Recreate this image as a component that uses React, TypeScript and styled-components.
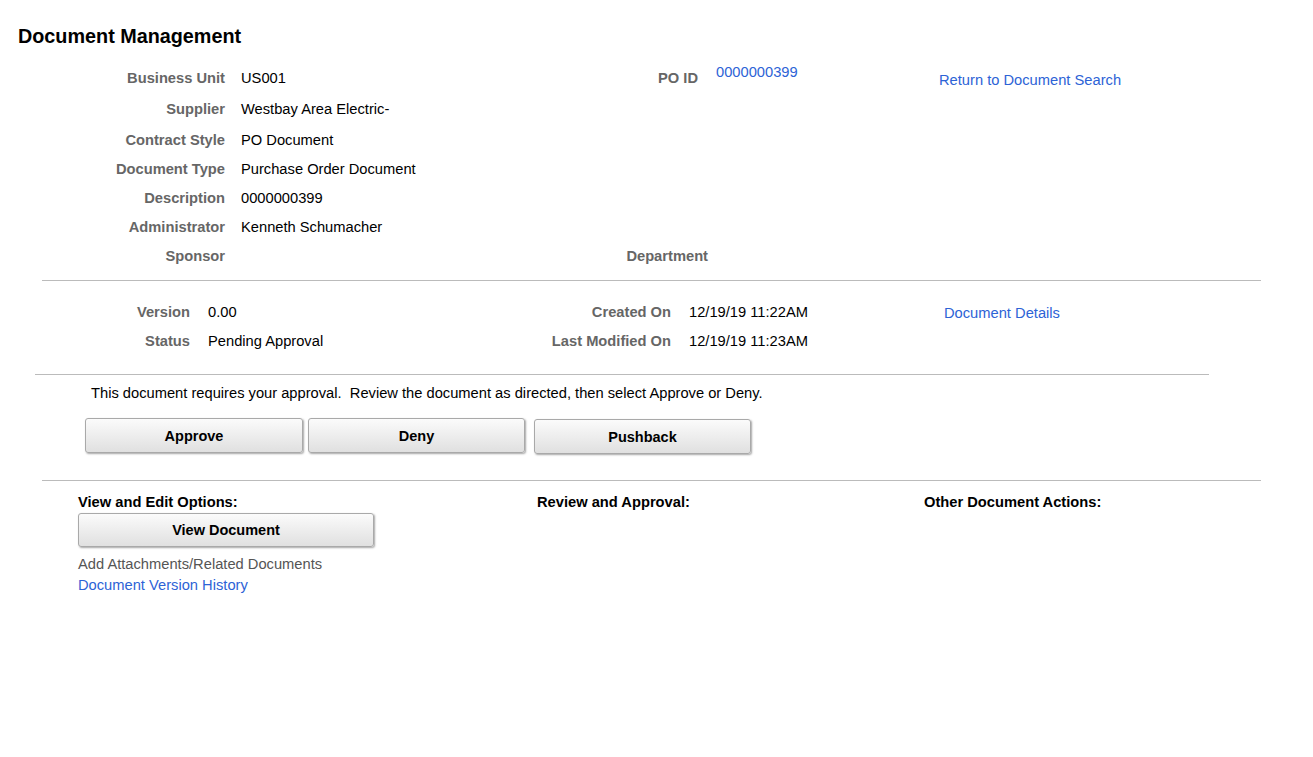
import React from 'react';
import styled, { createGlobalStyle } from 'styled-components';

const GlobalStyle = createGlobalStyle`
	body {
		margin: 0;
		background: #fff;
		font-family: 'Liberation Sans', Arial, sans-serif;
		font-size: 14.7px;
		color: #000;
	}
`;

const Page = styled.div`
	width: 1313px;
	padding-top: 24px;
`;

const Title = styled.h1`
	margin: 0 0 15px 18px;
	font-size: 19.8px;
	line-height: 24px;
	font-weight: bold;
	color: #000;
`;

const HeaderGrid = styled.div`
	display: grid;
	grid-template-columns: 225px 375px 98px 241px auto;
	grid-template-rows: 29px 33px 29px 29px 29px 29px 29px;
	align-items: center;
	line-height: 16px;
`;

const VersionGrid = styled.div`
	display: grid;
	grid-template-columns: 190px 340px 141px 273px auto;
	grid-auto-rows: 29px;
	align-items: center;
	line-height: 16px;
	margin-top: 16px;
`;

const Label = styled.div<{ $shift?: number }>`
	text-align: right;
	font-weight: bold;
	color: #666;
	white-space: nowrap;
	margin-right: ${(p) => -(p.$shift || 0)}px;
`;

const Value = styled.div<{ $pad: number; $lift?: number }>`
	padding-left: ${(p) => p.$pad}px;
	white-space: nowrap;
	position: relative;
	top: ${(p) => -(p.$lift || 0)}px;
`;

const Link = styled.a<{ $drop?: number }>`
	color: #2d63d6;
	text-decoration: none;
	white-space: nowrap;
	position: relative;
	top: ${(p) => p.$drop || 0}px;
	cursor: pointer;
`;

const Rule = styled.hr<{ $left: number; $right: number; $top?: number }>`
	border: 0;
	border-top: 1px solid #bbb;
	height: 0;
	margin: ${(p) => p.$top || 0}px ${(p) => p.$right}px 0 ${(p) => p.$left}px;
`;

const Message = styled.p`
	margin: 10px 0 0 91px;
	line-height: 16px;
`;

const ButtonRow = styled.div`
	display: flex;
	gap: 5px;
	margin: 17px 0 26px 85px;
	align-items: flex-start;
`;

const Button = styled.button<{ $width: number; $height?: number; $offset?: number }>`
	width: ${(p) => p.$width}px;
	height: ${(p) => p.$height || 35}px;
	margin-left: ${(p) => p.$offset || 0}px;
	margin-top: ${(p) => (p.$offset ? 1 : 0)}px;
	border: 1px solid #a9a9a9;
	border-radius: 3px;
	background: linear-gradient(#fbfbfb, #e0e0e0);
	box-shadow: 1px 1px 2px rgba(0, 0, 0, 0.35);
	font-family: 'Liberation Sans', Arial, sans-serif;
	font-size: 14.5px;
	font-weight: bold;
	color: #000;
	padding: 0;
	cursor: pointer;
`;

const Actions = styled.div`
	display: grid;
	grid-template-columns: 459px 387px auto;
	margin: 13px 0 0 78px;
`;

const ActionColumn = styled.div`
	display: flex;
	flex-direction: column;
	align-items: flex-start;
`;

const Heading = styled.div`
	font-weight: bold;
	line-height: 16px;
	margin-bottom: 3px;
`;

const GrayText = styled.div`
	color: #555;
	line-height: 16px;
	margin-top: 9px;
`;

const LinkLine = styled.div`
	margin-top: 5px;
	line-height: 16px;
`;

export default function App() {
	return (
		<Page>
			<GlobalStyle />
			<Title>Document Management</Title>

			<HeaderGrid>
				<Label>Business Unit</Label>
				<Value $pad={16}>US001</Value>
				<Label>PO ID</Label>
				<Value $pad={18} $lift={6}>
					<Link>0000000399</Link>
				</Value>
				<Link $drop={2}>Return to Document Search</Link>

				<Label style={{ gridColumn: 1 }}>Supplier</Label>
				<Value $pad={16}>Westbay Area Electric-</Value>

				<Label style={{ gridColumn: 1 }}>Contract Style</Label>
				<Value $pad={16}>PO Document</Value>

				<Label style={{ gridColumn: 1 }}>Document Type</Label>
				<Value $pad={16}>Purchase Order Document</Value>

				<Label style={{ gridColumn: 1 }}>Description</Label>
				<Value $pad={16}>0000000399</Value>

				<Label style={{ gridColumn: 1 }}>Administrator</Label>
				<Value $pad={16}>Kenneth Schumacher</Value>

				<Label style={{ gridColumn: 1 }}>Sponsor</Label>
				<Value $pad={16} />
				<Label $shift={10}>Department</Label>
			</HeaderGrid>

			<Rule $left={42} $right={52} $top={10} />

			<VersionGrid>
				<Label>Version</Label>
				<Value $pad={18}>0.00</Value>
				<Label>Created On</Label>
				<Value $pad={18}>12/19/19 11:22AM</Value>
				<Link $drop={1}>Document Details</Link>

				<Label style={{ gridColumn: 1 }}>Status</Label>
				<Value $pad={18}>Pending Approval</Value>
				<Label>Last Modified On</Label>
				<Value $pad={18}>12/19/19 11:23AM</Value>
			</VersionGrid>

			<Rule $left={35} $right={104} $top={19} />

			<Message>This document requires your approval.&nbsp; Review the document as directed, then select Approve or Deny.</Message>

			<ButtonRow>
				<Button $width={218}>Approve</Button>
				<Button $width={217}>Deny</Button>
				<Button $width={217} $offset={4}>Pushback</Button>
			</ButtonRow>

			<Rule $left={42} $right={52} />

			<Actions>
				<ActionColumn>
					<Heading>View and Edit Options:</Heading>
					<Button $width={296} $height={34}>View Document</Button>
					<GrayText>Add Attachments/Related Documents</GrayText>
					<LinkLine>
						<Link>Document Version History</Link>
					</LinkLine>
				</ActionColumn>
				<ActionColumn>
					<Heading>Review and Approval:</Heading>
				</ActionColumn>
				<ActionColumn>
					<Heading>Other Document Actions:</Heading>
				</ActionColumn>
			</Actions>
		</Page>
	);
}
